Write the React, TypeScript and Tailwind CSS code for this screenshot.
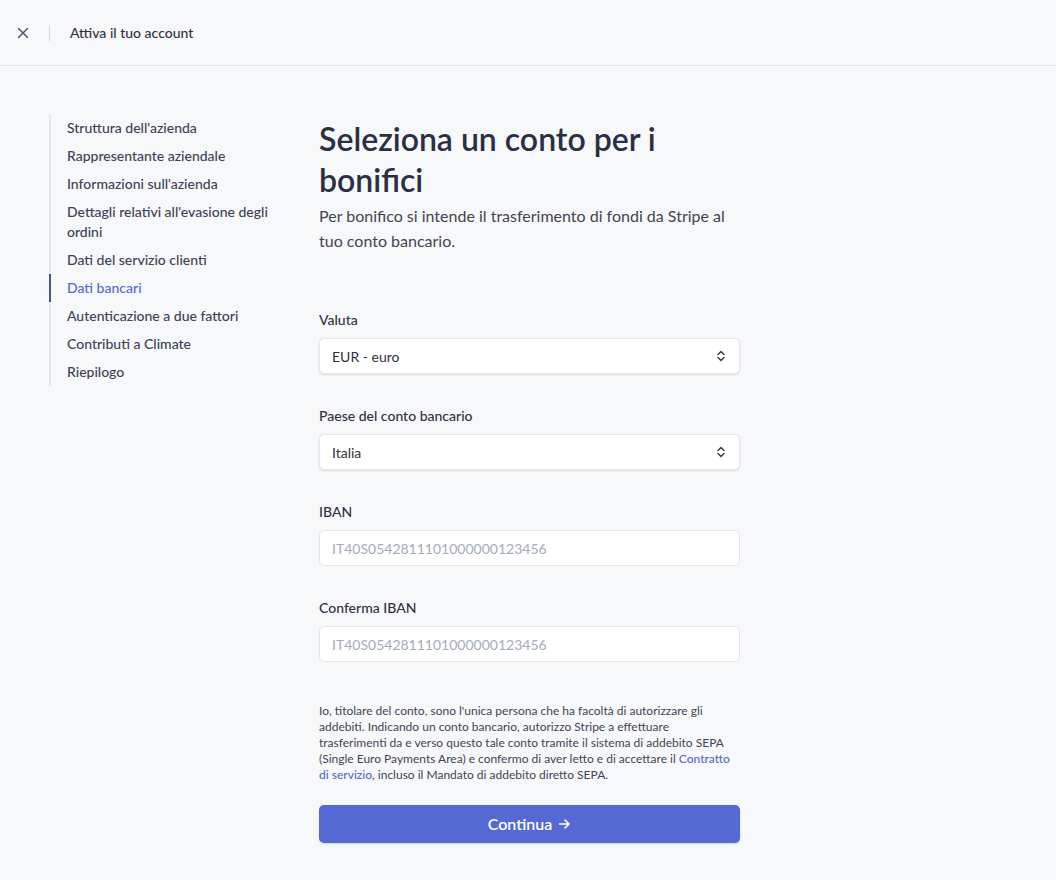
import React from "react";

const navItems = [
  "Struttura dell'azienda",
  "Rappresentante aziendale",
  "Informazioni sull'azienda",
  "Dettagli relativi all'evasione degli ordini",
  "Dati del servizio clienti",
  "Dati bancari",
  "Autenticazione a due fattori",
  "Contributi a Climate",
  "Riepilogo",
];

function Chevrons() {
  return (
    <svg width="12" height="14" viewBox="0 0 12 14" fill="none" stroke="#3c4257" strokeWidth="1.6" strokeLinecap="round" strokeLinejoin="round">
      <path d="M3 5.5 L6 2.5 L9 5.5" />
      <path d="M3 8.5 L6 11.5 L9 8.5" />
    </svg>
  );
}

function SelectField({ label, value }: { label: string; value: string }) {
  return (
    <div className="flex flex-col">
      <label className="text-[14px] leading-[20px] font-medium text-[#30313d]">{label}</label>
      <div className="mt-2 h-[36px] flex items-center justify-between px-3 bg-white rounded-[5px] border border-[#e3e6ea] shadow-[0_1px_2px_rgba(0,0,0,0.12)]">
        <span className="text-[14px] text-[#30313d]">{value}</span>
        <Chevrons />
      </div>
    </div>
  );
}

function InputField({ label, placeholder }: { label: string; placeholder: string }) {
  return (
    <div className="flex flex-col">
      <label className="text-[14px] leading-[20px] font-medium text-[#30313d]">{label}</label>
      <div className="mt-2 h-[36px] flex items-center px-3 bg-white rounded-[5px] border border-[#e3e6ea]">
        <span className="text-[14px] text-[#a3acb9]">{placeholder}</span>
      </div>
    </div>
  );
}

export default function App() {
  return (
    <div className="min-h-[880px] bg-[#f7f8fa] text-[#30313d]" style={{ fontFamily: "Lato, 'Noto Sans', sans-serif" }}>
      <header className="h-[66px] border-b border-[#e3e5ea] flex items-center">
        <div className="w-[44px] flex justify-center pl-[2px]">
          <svg width="12" height="12" viewBox="0 0 12 12" stroke="#50576b" strokeWidth="1.5" strokeLinecap="round">
            <path d="M1.5 1.5 L10.5 10.5 M10.5 1.5 L1.5 10.5" />
          </svg>
        </div>
        <div className="ml-[5px] w-px h-[16px] bg-[#d5d8de]" />
        <div className="ml-5 text-[14px] font-medium text-[#30313d]">Attiva il tuo account</div>
      </header>

      <div className="flex pl-[49px] pt-[48px]">
        <nav className="w-[270px] shrink-0 pr-8">
          <ul className="border-l-2 border-[#e6e8ec]">
            {navItems.map((item) => {
              const active = item === "Dati bancari";
              return (
                <li
                  key={item}
                  className={
                    "-ml-[2px] pl-[16px] py-1 text-[14px] leading-[20px] font-medium border-l-2 " +
                    (active ? "border-[#4a5681] text-[#5469d4]" : "border-transparent text-[#3c4257]")
                  }
                >
                  {item}
                </li>
              );
            })}
          </ul>
        </nav>

        <main className="w-[421px] shrink-0 pt-[4px]">
          <h1 className="text-[32px] leading-[41px] font-semibold text-[#2a2f45]">
            Seleziona un conto per i bonifici
          </h1>
          <p className="mt-[3px] text-[16px] leading-[25px] text-[#414552]">
            Per bonifico si intende il trasferimento di fondi da Stripe al tuo conto bancario.
          </p>

          <div className="mt-[57px] flex flex-col gap-[32px]">
            <SelectField label="Valuta" value="EUR - euro" />
            <SelectField label="Paese del conto bancario" value="Italia" />
            <InputField label="IBAN" placeholder="IT40S0542811101000000123456" />
            <InputField label="Conferma IBAN" placeholder="IT40S0542811101000000123456" />
          </div>

          <p className="mt-[41px] text-[12px] leading-[16px] text-[#414552] whitespace-nowrap">
            Io, titolare del conto, sono l'unica persona che ha facoltà di autorizzare gli
            <br />
            addebiti. Indicando un conto bancario, autorizzo Stripe a effettuare
            <br />
            trasferimenti da e verso questo tale conto tramite il sistema di addebito SEPA
            <br />
            (Single Euro Payments Area) e confermo di aver letto e di accettare il{" "}
            <span className="text-[#5469d4] font-medium">Contratto</span>
            <br />
            <span className="text-[#5469d4] font-medium">di servizio</span>, incluso il Mandato di addebito diretto SEPA.
          </p>

          <button className="mt-[22px] w-full h-[38px] rounded-[5px] bg-[#5469d4] text-white text-[16px] font-semibold flex items-center justify-center gap-1.5 shadow-[0_1px_2px_rgba(0,0,0,0.15)]">
            Continua
            <svg width="13" height="12" viewBox="0 0 13 12" fill="none" stroke="white" strokeWidth="1.6" strokeLinecap="round" strokeLinejoin="round">
              <path d="M1.5 6 H11 M7 2 L11 6 L7 10" />
            </svg>
          </button>
        </main>
      </div>
    </div>
  );
}
